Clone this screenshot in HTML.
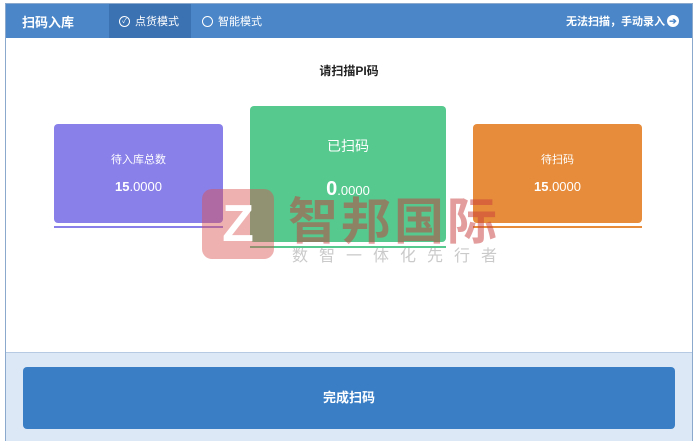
<!DOCTYPE html>
<html><head><meta charset="utf-8"><style>
*{margin:0;padding:0;box-sizing:border-box}
body{width:700px;height:446px;background:#fff;position:relative;overflow:hidden;font-family:"Liberation Sans","Noto Sans CJK SC",sans-serif}
.frame{position:absolute;left:5px;top:3px;width:688px;height:438px;border:1px solid #8aa9cc;background:#fff}
.hdr{position:absolute;left:0;top:0;width:100%;height:34px;background:#4a86c8;color:#fff}
.t{position:absolute;top:0;height:34px;font-size:12px;font-weight:bold;display:flex;align-items:center}
.tab{position:absolute;left:103px;top:0;width:82px;height:34px;background:#3b72b2}
.ic{display:inline-block;width:11px;height:11px;border:1px solid #fff;border-radius:50%;margin-right:5px;font-size:7px;line-height:9px;text-align:center}
.card{position:absolute;border-radius:4px;color:#fff;text-align:center}
.ln{position:absolute;height:2px}
.bot{position:absolute;left:0;top:348px;width:100%;height:89px;background:#dce8f5;border-top:1px solid #b6cbe3}
.btn{position:absolute;left:17px;top:14px;width:652px;height:62px;background:#3a7fc6;border-radius:4px;color:#fff;font-weight:bold;font-size:13px;text-align:center;line-height:62px}
</style></head><body>
<div class="frame">
<div class="hdr">
<div class="t" style="left:16px;font-size:13px">扫码入库</div>
<div class="tab"></div>
<div class="t" style="left:113px;font-weight:normal;font-size:11px"><span class="ic">✓</span>点货模式</div>
<div class="t" style="left:196px;font-weight:normal;font-size:11px"><span class="ic"></span>智能模式</div>
<div class="t" style="left:560px;font-size:11px">无法扫描，手动录入<span style="display:inline-block;width:12px;height:12px;background:#fff;color:#4a86c8;border-radius:50%;font-size:9px;line-height:12px;text-align:center;margin-left:2px">➔</span></div>
</div>
<div style="position:absolute;left:0;top:58px;width:100%;text-align:center;font-size:12px;font-weight:bold;color:#222">请扫描PI码</div>
<div class="card" style="left:48px;top:120px;width:169px;height:99px;background:#8a80ea"><div style="margin-top:27px;font-size:11px">待入库总数</div><div style="margin-top:12px;font-size:13px"><b>15</b>.0000</div></div>
<div class="ln" style="left:48px;top:222px;width:169px;background:#8a80ea"></div>
<div class="card" style="left:244px;top:102px;width:196px;height:136px;background:#55c98e"><div style="margin-top:30px;font-size:14px">已扫码</div><div style="margin-top:22px;font-size:13px"><b style="font-size:20px">0</b>.0000</div></div>
<div class="ln" style="left:244px;top:242px;width:196px;background:#55c98e"></div>
<div class="card" style="left:467px;top:120px;width:169px;height:99px;background:#e68c3a"><div style="margin-top:27px;font-size:11px">待扫码</div><div style="margin-top:12px;font-size:13px"><b>15</b>.0000</div></div>
<div class="ln" style="left:467px;top:222px;width:169px;background:#e68c3a"></div>
<div style="position:absolute;left:196px;top:185px;width:72px;height:70px;border-radius:10px;background:rgba(220,80,80,0.45)"><div style="position:absolute;left:14px;top:12px;width:44px;height:46px;color:#fff;font-size:52px;font-weight:bold;line-height:46px;text-align:center">Z</div></div>
<div style="position:absolute;left:282px;top:178px;font-size:50px;font-weight:bold;color:rgba(200,60,60,0.5);letter-spacing:3px">智邦国际</div>
<div style="position:absolute;left:286px;top:238px;font-size:16px;color:rgba(150,150,150,0.5);letter-spacing:11px">数智一体化先行者</div>
<div class="bot"><div class="btn">完成扫码</div></div>
</div>
</body></html>
